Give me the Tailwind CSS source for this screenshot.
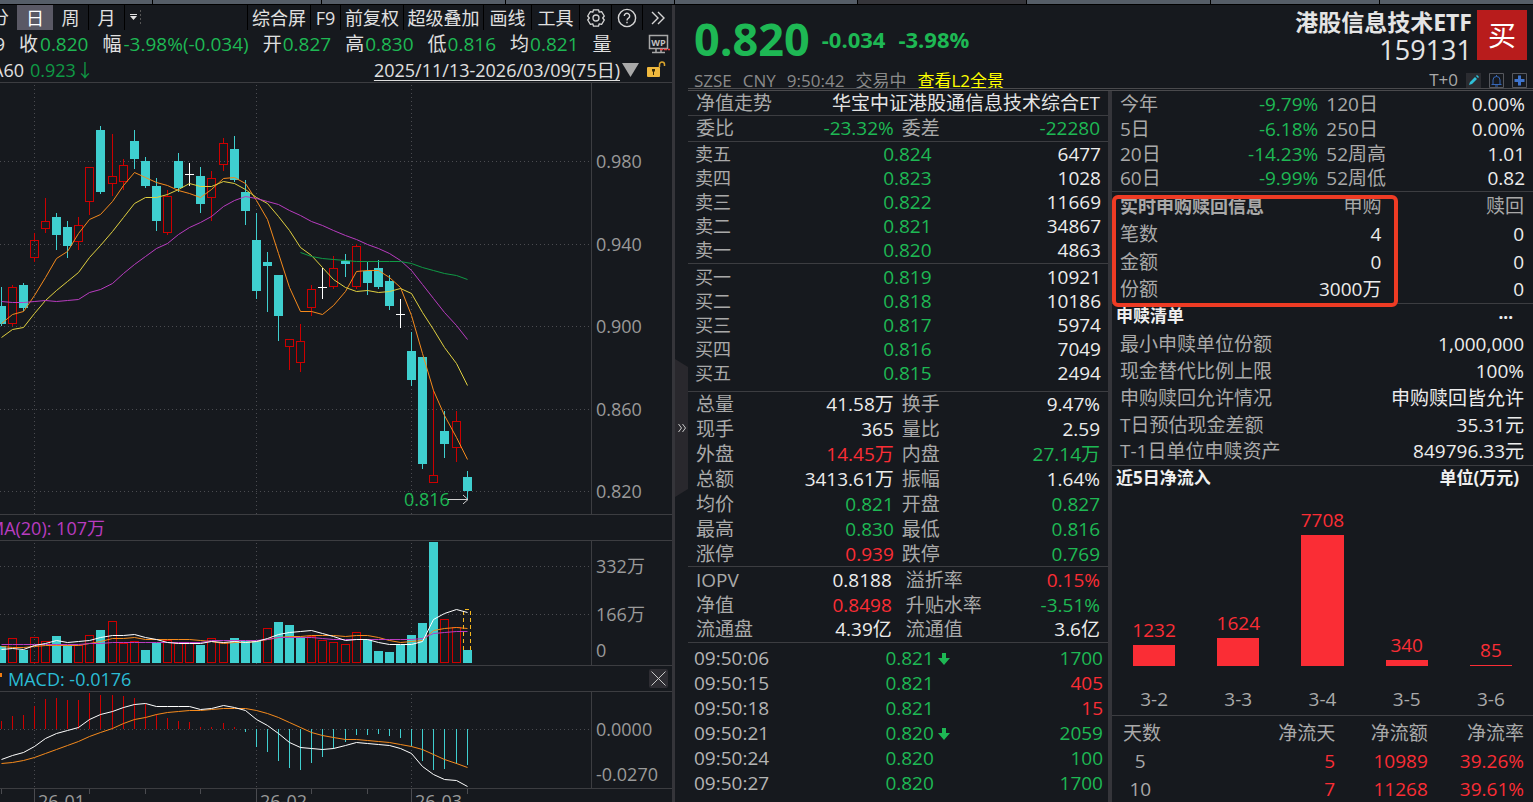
<!DOCTYPE html>
<html lang="zh-CN">
<head>
    <meta charset="UTF-8">
    <meta name="viewport" content="width=device-width, initial-scale=1.0">
    <title>港股信息技术ETF 159131</title>
    <script src="https://cdn.jsdelivr.net/npm/@tailwindcss/browser@4"></script>
</head>
<body class="h-screen overflow-hidden flex flex-col bg-[#16191e] text-[#a9a9a9] text-[19px] leading-6 whitespace-nowrap font-['Open_Sans','Noto_Sans_CJK_SC',sans-serif]">

    <!-- Window tab strip -->
    <div class="flex h-[5px] shrink-0 bg-[#555d67] border-b border-black">
        <div class="w-[10%] border-r border-black"></div>
        <div class="w-[11%] border-r border-black"></div>
        <div class="w-[12%] border-r border-black"></div>
        <div class="w-[11%] border-r border-black"></div>
        <div class="w-[12%] border-r border-black"></div>
        <div class="w-[11%] border-r border-black bg-[#35353a]"></div>
        <div class="w-[12%] border-r border-black"></div>
        <div class="w-[11%] border-r border-black"></div>
    </div>

    <main class="flex-1 min-h-0 grid grid-cols-[672fr_861fr]">

        <!-- K-line panel -->
        <section class="min-w-0 overflow-hidden flex flex-col">
            <nav class="flex h-[25px] shrink-0 text-[18px] text-[#e0e0e0]">
                <button class="w-[17px] flex justify-end pr-2 shrink-0">分</button>
                <button class="w-9 bg-[#5a5965] text-white">日</button>
                <button class="w-9 border-r border-black">周</button>
                <button class="w-9 border-r border-black">月</button>
                <button class="w-5 flex items-center justify-center" aria-label="更多周期">
                    <svg width="16" height="18" viewBox="0 0 16 18" fill="#e0e0e0">
                        <path d="M3 5h7v1H3zM3 7h7L6.500 11z"/>
                        <path d="M13 1h1v2h-1zM13 5h1v2h-1zM13 9h1v2h-1zM13 13h1v2h-1z" fill="#555"/>
                    </svg>
                </button>
                <div class="flex-1 border-r border-black"></div>
                <button class="w-[63px] border-r border-black">综合屏</button>
                <button class="w-[30px] border-r border-black">F9</button>
                <button class="w-[63px] border-r border-black">前复权</button>
                <button class="w-20 border-r border-black">超级叠加</button>
                <button class="w-12 border-r border-black">画线</button>
                <button class="w-12 border-r border-black">工具</button>
                <button class="w-8 border-r border-black flex items-center justify-center" aria-label="设置">
                    <svg width="20" height="20" viewBox="0 0 20 20" fill="none" stroke="#d5d5d5" stroke-width="1.3" stroke-linejoin="round">
                        <path d="M7.500 1.800 12.500 1.800 13.200 4.200 15.600 3.700 18.300 8 16.700 10 18.300 12 15.600 16.300 13.200 15.800 12.500 18.200 7.500 18.200 6.800 15.800 4.400 16.300 1.700 12 3.300 10 1.700 8 4.400 3.700 6.800 4.200Z"/>
                        <circle cx="10" cy="10" r="3"/>
                    </svg>
                </button>
                <button class="w-[31px] border-r border-black flex items-center justify-center" aria-label="帮助">
                    <svg width="20" height="20" viewBox="0 0 20 20" fill="none" stroke="#d5d5d5" stroke-width="1.4">
                        <circle cx="10" cy="10" r="8.600"/>
                        <path d="M7.300 8a2.700 2.700 0 1 1 4.200 2.200c-1 .7-1.500 1.100-1.500 2.300M10 13.800v1.500"/>
                    </svg>
                </button>
                <button class="w-[29px] flex items-center justify-center" aria-label="展开">
                    <svg width="14" height="14" viewBox="0 0 14 14" fill="none" stroke="#d5d5d5" stroke-width="1.400">
                        <path d="M1 1l6 6-6 6M7 1l6 6-6 6"/>
                    </svg>
                </button>
            </nav>

            <div class="flex items-center h-[27px] shrink-0 gap-[14px] text-[#e0e0e0]">
                <span class="w-[5px] flex justify-end">9</span>
                <span class="flex gap-[2px]">收<b class="font-normal text-[#1eb854]">0.820</b></span>
                <span class="flex gap-[2px]">幅<b class="font-normal text-[#1eb854]">-3.98%(-0.034)</b></span>
                <span class="flex gap-[1px]">开<b class="font-normal text-[#1eb854]">0.827</b></span>
                <span class="flex gap-[1px]">高<b class="font-normal text-[#1eb854]">0.830</b></span>
                <span class="flex gap-[1px]">低<b class="font-normal text-[#1eb854]">0.816</b></span>
                <span class="flex gap-[1px]">均<b class="font-normal text-[#1eb854]">0.821</b></span>
                <span>量</span>
                <svg class="ml-auto mr-[2px] shrink-0" width="22" height="20" viewBox="0 0 22 20">
                    <path d="M1.500 1.500h18v13h-18zM8 15v3M13 15v3M4 18.500h13" fill="none" stroke="#a8a8a8" stroke-width="1.500"/>
                    <text x="10.500" y="12" text-anchor="middle" font-size="9" font-weight="700" fill="#c0c0c0">WP</text>
                    <path d="M12 15.500h10" stroke="#f23a3a" stroke-width="1.500" stroke-dasharray="3 1"/>
                </svg>
            </div>

            <div class="flex items-center h-[26px] shrink-0 text-[18px] border-b border-[#3c3d41] text-[#e0e0e0]">
                <span class="w-6 flex justify-end shrink-0">MA60</span>
                <span class="ml-[6px] text-[#0f9a45]">0.923↓</span>
                <a href="#" class="ml-auto underline underline-offset-3">2025/11/13-2026/03/09(75日)</a>
                <svg class="ml-[2px] mr-2" width="17" height="14" viewBox="0 0 17 14"><path d="M0 0h17L8.500 14z" fill="#a9a9a9"/></svg>
                <svg class="mr-[6px]" width="19" height="17" viewBox="0 0 19 17">
                    <path d="M12.500 6V3.500a2.500 2.500 0 0 1 5 0V5" fill="none" stroke="#d9a42c" stroke-width="1.500"/>
                    <rect y="6" width="13" height="10" rx="1" fill="#f0b93e"/>
                    <path d="M5 8h3v2l-1 1v3H6v-3L5 10z" fill="#3a2c08"/>
                </svg>
            </div>

            <div class="flex h-[432px] shrink-0 border-b border-[#3c3d41]">
                <svg id="price-chart" class="flex-1 min-w-0 h-full border-r border-[#3c3d41]"></svg>
                <div class="w-20 pl-1 pt-[66px] pb-[11px] text-[18px] text-[#9a9a9a] flex flex-col justify-between">
                    <span>0.980</span><span>0.940</span><span>0.900</span><span>0.860</span><span>0.820</span>
                </div>
            </div>

            <div class="flex items-center h-[26px] shrink-0 text-[18px] border-b border-[#3c3d41] text-[#b93cc0]">
                <span class="w-[105px] flex justify-end">MA(20): 107万</span>
            </div>

            <div class="flex h-[125px] shrink-0 border-b border-[#3c3d41]">
                <svg id="volume-chart" class="flex-1 min-w-0 h-full border-r border-[#3c3d41]"></svg>
                <div class="w-20 pl-1 pt-[13px] text-[18px] text-[#9a9a9a] flex flex-col">
                    <span>332万</span><span class="mt-6">166万</span><span class="mt-3">0</span>
                </div>
            </div>

            <div class="flex items-center h-[26px] shrink-0 text-[18px] border-b border-[#3c3d41] text-[#2bbcd4]">
                <span class="w-[2px] h-1 bg-[#f07c10] mb-2"></span>
                <span class="ml-[6px]">MACD: -0.0176</span>
                <button class="ml-auto mr-1 w-[19px] h-[19px] bg-[#2e2d33] rounded-xs flex items-center justify-center" aria-label="关闭">
                    <svg width="15" height="15" viewBox="0 0 15 15" stroke="#c8c8c8" fill="none"><path d="M.5.5l14 14M14.500.5l-14 14"/></svg>
                </button>
            </div>

            <div class="flex h-[97px] shrink-0 border-b border-[#3c3d41]">
                <svg id="macd-chart" class="flex-1 min-w-0 h-full border-r border-[#3c3d41]"></svg>
                <div class="w-20 pl-1 pt-[25px] text-[18px] text-[#9a9a9a] flex flex-col">
                    <span>0.0000</span><span class="mt-[21px]">-0.0270</span>
                </div>
            </div>
            <svg id="date-axis" class="w-full h-8 shrink-0"></svg>
        </section>

        <!-- Quote panel -->
        <section class="relative min-w-0 flex flex-col pl-4 border-l-3 border-[#35353a]">
            <button class="absolute left-0 top-[354px] w-[13px] h-[138px] flex items-center justify-center bg-[#29282d] [clip-path:polygon(0_0,100%_8px,100%_130px,0_100%)]" aria-label="收起">
                <svg width="8" height="8" viewBox="0 0 8 8" fill="none" stroke="#c8c8c8"><path d="M.5 0l3 4-3 4M4.500 0l3 4-3 4"/></svg>
            </button>

            <header class="-ml-[3px] h-[86px] shrink-0 overflow-hidden flex justify-between border-b-3 border-double border-[#4a4a4d]">
                <div class="pl-[6px] flex flex-col">
                    <div class="flex items-center h-16 shrink-0 pt-1 font-bold text-[22px] text-[#1eb854]">
                        <span class="text-[45px] leading-[56px]">0.820</span>
                        <span class="ml-3">-0.034</span>
                        <span class="ml-[13px]">-3.98%</span>
                    </div>
                    <div class="flex gap-[11px] shrink-0 text-[17px] text-[#8a8a8a]">
                        <span>SZSE</span><span>CNY</span><span>9:50:42</span><span>交易中</span>
                        <a href="#" class="text-[#ffff00] underline">查看L2全景</a>
                    </div>
                </div>
                <div class="pr-[6px] flex flex-col">
                    <div class="flex shrink-0 gap-[5px] pt-[3px]">
                        <div class="flex flex-col items-end text-[#e4e4e4]">
                            <h1 class="text-[23px] leading-7 font-bold">港股信息技术ETF</h1>
                            <span class="text-[27px] leading-7">159131</span>
                        </div>
                        <button class="w-[50px] h-[50px] bg-[#b81c1c] text-white text-[28px] mt-[2px]">买</button>
                    </div>
                    <div class="flex shrink-0 items-center justify-end gap-2 text-[17px] h-6 mt-1">
                        <span>T+0</span>
                        <button aria-label="编辑"><svg width="15" height="15" viewBox="0 0 15 15"><path d="M0 0h15v15H0z" fill="#2b2c31"/><path d="M3 12l1-3 5-5 2 2-5 5zM10 3l1-1 2 2-1 1z" fill="#2fc0d8"/></svg></button>
                        <button aria-label="预警"><svg width="15" height="15" viewBox="0 0 15 15" fill="none"><path d="M.5.5h14v14H.5z" stroke="#56585e"/><path d="M2.500 11.500h10M4 11V7a3.500 3.500 0 0 1 7 0v4M7.500 2v1.500M6 13h3" stroke="#3768b8"/></svg></button>
                        <button aria-label="添加"><svg width="15" height="15" viewBox="0 0 15 15" fill="none"><path d="M.5.5h14v14H.5z" stroke="#56585e"/><path d="M7.500 2.500v10M2.500 7.500h10" stroke="#3f74cc" stroke-width="3"/></svg></button>
                    </div>
                </div>
            </header>

            <div class="-ml-[3px] flex-1 min-h-0 grid grid-cols-[420fr_425fr]">

                <!-- Order book and quote -->
                <div class="min-w-0 overflow-hidden">
                    <div class="flex justify-between h-[25px] px-2 border-b border-[#3c3d41]">
                        <span>净值走势</span><span class="text-[#e4e4e4]">华宝中证港股通信息技术综合ET</span>
                    </div>
                    <table class="w-full table-fixed"><tbody id="commission"></tbody></table>
                    <table class="w-full table-fixed"><tbody id="sell-orders"></tbody></table>
                    <div class="pt-[1px] pb-[6px] mt-[1px] border-y border-[#3c3d41]">
                        <table class="w-full table-fixed"><tbody id="buy-orders"></tbody></table>
                    </div>
                    <table class="w-full table-fixed"><tbody id="quote"></tbody></table>
                    <table class="w-full table-fixed"><tbody id="iopv" class="[&_th:nth-child(3)]:pl-3 [&_td:nth-child(2)]:pr-[2px]"></tbody></table>
                    <table class="w-full table-fixed mt-[3px]"><tbody id="trades"></tbody></table>
                </div>

                <!-- Fund details -->
                <div class="relative min-w-0 border-l-4 border-[#35353a]">
                    <table class="w-full table-fixed"><tbody id="returns"></tbody></table>

                    <table class="w-full table-fixed border-b border-[#3c3d41]">
                        <thead>
                            <tr class="h-7">
                                <th class="w-[40%] p-0 pl-2 text-left text-[18px] font-bold">实时申购赎回信息</th>
                                <th class="p-0 text-right font-normal">申购</th>
                                <th class="w-[36%] p-0 pr-[9px] text-right font-normal">赎回</th>
                            </tr>
                        </thead>
                        <tbody id="creation"></tbody>
                    </table>
                    <div class="absolute left-0 right-[135px] top-[104px] h-28 border-4 border-[#ee3b24] rounded-md"></div>

                    <div class="flex justify-between h-[26px] pl-1 pr-5 text-[17px] font-bold text-[#f0f0f0]">
                        <h2>申赎清单</h2><button class="leading-4 mb-2" aria-label="更多">...</button>
                    </div>
                    <table class="w-full border-b border-[#3c3d41]"><tbody id="basket"></tbody></table>

                    <div class="flex justify-between h-[26px] pl-1 pr-[14px] text-[17px] font-bold text-[#f0f0f0]">
                        <h2>近5日净流入</h2><span>单位(万元)</span>
                    </div>
                    <div id="flow-chart" class="grid grid-cols-5 border-b border-[#3c3d41]"></div>
                    <table class="w-full table-fixed mt-1 text-right">
                        <thead>
                            <tr class="h-[27px]">
                                <th class="w-[17%] p-0 pl-[11px] text-left font-normal">天数</th>
                                <th class="p-0 font-normal">净流天</th>
                                <th class="w-[22%] p-0 font-normal">净流额</th>
                                <th class="w-[25%] p-0 pr-[9px] font-normal">净流率</th>
                            </tr>
                        </thead>
                        <tbody id="flow-days"></tbody>
                    </table>
                </div>
            </div>
        </section>
    </main>

    <script>
        const COLORS = { g: 'text-[#1eb854]', r: 'text-[#fa2d35]', w: 'text-[#ececec]' };

        // Two label/value pairs per row: [label, value, colour, label, value, colour]
        function pairRows(id, rows) {
            document.getElementById(id).innerHTML = rows.map((r, i) => `
                <tr class="h-[25px] ${i === rows.length - 1 ? 'border-b border-[#3c3d41]' : ''}">
                    <th class="w-[21%] p-0 pl-2 text-left font-normal">${r[0]}</th>
                    <td class="p-0 text-right ${COLORS[r[2]]}">${r[1]}</td>
                    <th class="w-[25%] p-0 pl-2 text-left font-normal">${r[3]}</th>
                    <td class="w-[26%] p-0 pr-2 text-right ${COLORS[r[5]]}">${r[4]}</td>
                </tr>`).join('');
        }

        function orderRows(id, rows) {
            document.getElementById(id).innerHTML = rows.map(r => `
                <tr class="h-6">
                    <th class="w-[30%] p-0 pl-[7px] text-left text-[18px] font-normal">${r[0]}</th>
                    <td class="w-[28%] p-0 text-right ${COLORS.g}">${r[1]}</td>
                    <td class="p-0 pr-[7px] text-right ${COLORS.w}">${r[2]}</td>
                </tr>`).join('');
        }

        pairRows('commission', [['委比', '-23.32%', 'g', '委差', '-22280', 'g']]);
        orderRows('sell-orders', [['卖五', '0.824', 6477], ['卖四', '0.823', 1028], ['卖三', '0.822', 11669], ['卖二', '0.821', 34867], ['卖一', '0.820', 4863]]);
        orderRows('buy-orders', [['买一', '0.819', 10921], ['买二', '0.818', 10186], ['买三', '0.817', 5974], ['买四', '0.816', 7049], ['买五', '0.815', 2494]]);
        pairRows('quote', [
            ['总量', '41.58万', 'w', '换手', '9.47%', 'w'],
            ['现手', '365', 'w', '量比', '2.59', 'w'],
            ['外盘', '14.45万', 'r', '内盘', '27.14万', 'g'],
            ['总额', '3413.61万', 'w', '振幅', '1.64%', 'w'],
            ['均价', '0.821', 'g', '开盘', '0.827', 'g'],
            ['最高', '0.830', 'g', '最低', '0.816', 'g'],
            ['涨停', '0.939', 'r', '跌停', '0.769', 'g']
        ]);
        pairRows('iopv', [
            ['IOPV', '0.8188', 'w', '溢折率', '0.15%', 'r'],
            ['净值', '0.8498', 'r', '升贴水率', '-3.51%', 'g'],
            ['流通盘', '4.39亿', 'w', '流通值', '3.6亿', 'w']
        ]);
        pairRows('returns', [
            ['今年', '-9.79%', 'g', '120日', '0.00%', 'w'],
            ['5日', '-6.18%', 'g', '250日', '0.00%', 'w'],
            ['20日', '-14.23%', 'g', '52周高', '1.01', 'w'],
            ['60日', '-9.99%', 'g', '52周低', '0.82', 'w']
        ]);

        const arrow = '<svg class="inline ml-1 align-baseline" width="12" height="12" viewBox="0 0 12 12" fill="#1eb854"><path d="M4 0h4v5h4l-6 7-6-7h4z"/></svg>';
        document.getElementById('trades').innerHTML = [
            ['09:50:06', '0.821', 1700, 'g', true],
            ['09:50:15', '0.821', 405, 'r'],
            ['09:50:18', '0.821', 15, 'r'],
            ['09:50:21', '0.820', 2059, 'g', true],
            ['09:50:24', '0.820', 100, 'g'],
            ['09:50:27', '0.820', 1700, 'g'],
            ['09:50:30', '0.820', 200, 'r']
        ].map(t => `
            <tr class="h-[25px]">
                <td class="w-[47%] p-0 pl-[6px] text-[#b4b4b4]">${t[0]}</td>
                <td class="p-0 ${COLORS.g}">${t[1]}${t[4] ? arrow : ''}</td>
                <td class="w-[30%] p-0 pr-[5px] text-right ${COLORS[t[3]]}">${t[2]}</td>
            </tr>`).join('');

        document.getElementById('creation').innerHTML = [['笔数', 4, 0], ['金额', 0, 0], ['份额', '3000万', 0]].map(r => `
            <tr class="h-7">
                <th class="p-0 pl-2 text-left font-normal">${r[0]}</th>
                <td class="p-0 text-right ${COLORS.w}">${r[1]}</td>
                <td class="p-0 pr-[9px] text-right ${COLORS.w}">${r[2]}</td>
            </tr>`).join('');

        document.getElementById('basket').innerHTML = [
            ['最小申赎单位份额', '1,000,000'],
            ['现金替代比例上限', '100%'],
            ['申购赎回允许情况', '申购赎回皆允许'],
            ['T日预估现金差额', '35.31元'],
            ['T-1日单位申赎资产', '849796.33元']
        ].map(r => `
            <tr class="h-[27px]">
                <th class="p-0 pl-2 text-left font-normal">${r[0]}</th>
                <td class="p-0 pr-[9px] text-right ${COLORS.w}">${r[1]}</td>
            </tr>`).join('');

        document.getElementById('flow-chart').innerHTML = [['3-2', 1232], ['3-3', 1624], ['3-4', 7708], ['3-5', 340], ['3-6', 85]].map(([day, v]) => `
            <div class="flex flex-col items-center">
                <div class="h-[174px] w-full flex flex-col items-center justify-end">
                    <span class="mb-[3px] ${COLORS.r}">${v}</span>
                    <div class="w-1/2 bg-[#fa2d35]" style="height:${Math.max(1, Math.round(v / 7708 * 131))}px"></div>
                </div>
                <span class="mt-[21px] mb-1">${day}</span>
            </div>`).join('');

        document.getElementById('flow-days').innerHTML = [[5, 5, 10989, '39.26%'], [10, 7, 11268, '39.61%']].map(r => `
            <tr class="h-7 ${COLORS.r}">
                <th class="p-0 pr-[15px] text-center font-normal text-[#a9a9a9]">${r[0]}</th>
                <td class="p-0">${r[1]}</td>
                <td class="p-0">${r[2]}</td>
                <td class="p-0 pr-[9px]">${r[3]}</td>
            </tr>`).join('');

        // ---- K-line charts ----
        const CYAN = '#3fcfcf', RED = '#cc0000', WHITE = '#ffffff', ORANGE = '#f58a1c', YELLOW = '#e0d040', MAGENTA = '#b93cc0', GREEN = '#0f9a45';
        // one bar every 11px, with one extra pixel at every tenth
        const X = Array.from({ length: 43 }, (_, i) => 1 + i * 11 + (i > 9) + (i > 19) + (i > 30) + (i > 40));

        const grid = (ys, h) => ys.map(y => `<path d="M0 ${y + .5}H600" stroke="#4a4b50" stroke-dasharray="1 3"/>`).join('')
            + [34, 256, 411].map(x => `<path d="M${x + .5} 2V${h}" stroke="#4a4b50" stroke-dasharray="1 3"/>`).join('');
        const line = (ys, color, from = 0) => `<polyline fill="none" stroke="${color}" points="${ys.map((y, i) => `${X[i + from] + .5},${y + .5}`).join(' ')}"/>`;
        const box = (x, top, bottom, type) => type === 'd'
            ? `<rect x="${x - 4}" y="${top}" width="9" height="${bottom - top}" fill="${CYAN}"/>`
            : `<rect x="${x - 3.5}" y="${top + .5}" width="8" height="${bottom - top - 1}" fill="none" stroke="${RED}"/>`;

        // type (d down, u up, w flat), high, body top, body bottom, low
        const candles = [
            ['d',204,223,241,243],['u',202,204,241,243],['d',200,202,225,228],['u',150,157,175,179],['u',115,138,146,150],
            ['d',130,134,152,167],['d',138,144,163,175],['u',134,142,159,167],['u',84,84,119,132],['d',43,47,109,111],
            ['u',51,93,101,113],['u',76,82,99,107],['d',47,58,76,86],['d',74,78,103,105],['d',95,103,138,148],
            ['u',107,113,150,152],['d',70,78,105,109],['w',80,91,92,103],['d',84,93,121,130],['u',88,95,115,138],
            ['u',55,60,82,88],['d',53,66,97,99],['d',97,109,128,142],['d',130,157,208,216],['d',169,179,183,229],
            ['d',192,192,233,258],['u',256,256,264,287],['u',241,258,280,289],['u',202,206,225,233],['w',185,204,205,216],
            ['u',173,185,204,206],['d',171,178,181,194],['u',161,163,204,206],['d',179,188,200,212],['d',177,185,204,206],
            ['d',192,198,223,227],['w',216,231,232,245],['d',249,268,297,303],['d',274,274,381,386],['u',307,392,400,400],
            ['d',328,348,361,375],['u',328,338,365,379],['d',388,394,408,417]
        ];
        document.getElementById('price-chart').innerHTML = grid([78, 161, 243, 326, 408], 431)
            + candles.map(([type, high, top, bottom, low], i) => {
                const x = X[i];
                if (type === 'w') return `<path d="M${x + .5} ${high}V${low}M${x - 4} ${top + .5}h9" stroke="${WHITE}"/>`;
                return `<path d="M${x + .5} ${high}V${top}M${x + .5} ${bottom}V${low}" stroke="${type === 'd' ? CYAN : RED}"/>` + box(x, top, bottom, type);
            }).join('')
            + line([240,231,228,212,194,175,168,150,136,131,118,102,89,94,99,102,107,110,114,106,95,94,100,117,136,170,204,228,228,231,222,208,188,187,187,194,204,232,270,307,332,354,376], ORANGE)
            + line([254,246,244,230,217,207,198,189,174,162,148,134,120,114,114,111,106,100,103,103,98,100,106,114,120,133,147,164,172,184,196,204,208,207,209,208,205,210,229,246,264,280,302], YELLOW)
            + line([218,219,219,218,217,218,217,216,209,206,200,190,181,173,165,160,151,144,139,133,123,117,113,115,118,121,127,132,138,142,147,152,156,161,165,170,177,187,201,215,229,242,256], MAGENTA)
            + line([169,173,175,176,177,178,178,178,178,178,180,184,187,190,192,196], GREEN, 27)
            + `<text x="404" y="423" font-size="18" fill="#1eb854">0.816</text>
               <path d="M448 416.500h20M463 412l5 4.500-5 4.500" fill="none" stroke="#d0d0d0"/>`;

        const volumes = [
            ['d',105],['u',97],['d',109],['u',96],['u',100],['d',95],['d',104],['u',104],['u',94],['d',89],['u',80],
            ['u',102],['u',100],['d',109],['d',102],['u',99],['u',102],['u',102],['d',104],['u',97],['u',101],['d',97],
            ['d',100],['d',100],['u',87],['d',81],['d',84],['d',96],['u',95],['u',99],['u',101],['u',103],['u',91],
            ['d',98],['d',110],['d',111],['d',104],['d',94],['d',82],['d',1],['u',78],['u',86],['d',109]
        ];
        document.getElementById('volume-chart').innerHTML = grid([25, 73], 124)
            + volumes.map(([type, top], i) => box(X[i], top, 122, type)).join('')
            + '<path d="M463.500 109V68.500H470.500V109" fill="none" stroke="#f5b820" stroke-dasharray="4 3"/>'
            + line([105,106,106,105,104,104,104,104,102,100,97,97,96,98,98,98,98,98,99,100,102,101,101,100,98,96,95,95,94,94,94,95,94,94,96,99,101,100,99,89,87,86,87], ORANGE)
            + line([103,103,103,103,103,103,103,103,102,102,101,101,101,101,101,101,101,101,101,99,99,99,99,99,98,96,96,96,96,97,98,98,98,98,98,98,98,98,97,92,91,90,90], MAGENTA)
            + line([108,107,108,104,102,99,101,100,99,96,94,94,93,96,98,101,102,102,102,100,101,100,101,100,97,93,91,90,89,92,95,99,98,98,101,103,103,103,100,78,72,68,71], WHITE);

        const macd = [29,24,23,14,7,6,8,8,1,3,3,4,6,12,22,26,29,30,35,35,31,35,40,55,60,69,76,78,71,65,57,50,43,43,42,44,46,54,69,78,77,72,73];
        document.getElementById('macd-chart').innerHTML = grid([37], 96)
            + macd.map((y, i) => `<path d="M${X[i] + .5} 37V${y}" stroke="${y < 37 ? RED : CYAN}"/>`).join('')
            + line([71,70,68,65,61,57,53,49,44,40,36,31,27,25,22,20,19,18,18,17,16,16,16,18,21,25,30,35,40,43,45,47,47,48,49,50,52,54,57,62,67,71,75], ORANGE)
            + line([67,63,60,54,46,41,38,35,27,22,19,15,12,11,14,14,14,14,17,16,13,15,18,27,33,41,50,55,56,57,56,53,50,51,52,53,56,61,74,82,87,88,94], WHITE);

        document.getElementById('date-axis').innerHTML =
            [1, 89, 145, 200, 311, 367, 467].map(x => `<path d="M${x + .5} 0v5" stroke="#4a4b50"/>`).join('')
            + [[34, '26-01'], [256, '26-02'], [411, '26-03']].map(([x, label]) => `<path d="M${x + .5} 0v20" stroke="#4a4b50"/><text x="${x + 4}" y="19" font-size="18" fill="#9a9a9a">${label}</text>`).join('');
    </script>
</body>
</html>
